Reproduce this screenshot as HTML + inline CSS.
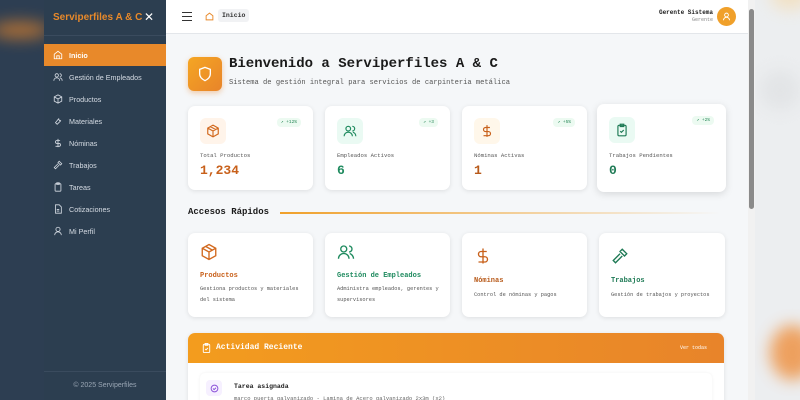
<!DOCTYPE html>
<html><head><meta charset="utf-8"><style>
*{box-sizing:border-box;margin:0;padding:0}
html,body{width:800px;height:400px;overflow:hidden}
body{position:relative;background:#2c3e50;font-family:"Liberation Mono","DejaVu Sans Mono",monospace}
.left{position:absolute;left:0;top:0;width:44px;height:400px;background:#2d3e52;overflow:hidden}
.blur{position:absolute;border-radius:50%;filter:blur(8px)}
.side{position:absolute;left:44px;top:0;width:122px;height:400px;background:#2c3e50;font-family:"Liberation Sans",sans-serif;color:#d5dbe3;font-size:7.2px}
.side .brand{height:36px;border-bottom:1px solid #3a4b5e;padding:12px 9px;color:#e8892a;font-weight:bold;font-size:10px;position:relative}
.side .brand span{position:absolute;right:12px;top:10px;color:#fff;font-weight:normal;font-size:12px}
.nav{margin-top:8px}
.nav div{height:22px;display:flex;align-items:center;padding-left:9px;gap:6px}
.nav div.act{background:#e8892a;color:#fff;font-weight:bold}
.nav svg{width:10px;height:10px;stroke:currentColor;fill:none;stroke-width:2}
.foot{position:absolute;bottom:0;left:0;right:0;height:29px;border-top:1px solid #3a4b5e;text-align:center;line-height:27px;font-size:7px;color:#9aa6b4}
.main{position:absolute;left:166px;top:0;width:582px;height:400px;background:#f5f7f9;overflow:hidden}
.top{height:34px;background:#fff;border-bottom:1px solid #e3e6ea;position:relative}
.sb{position:absolute;left:748px;top:0;width:7px;height:400px;background:#f1f1f1}
.sb div{position:absolute;left:1px;top:9px;width:5px;height:200px;background:#8a8a8a;border-radius:3px}
.right{position:absolute;left:755px;top:0;width:45px;height:400px;background:#eceef0;overflow:hidden}
.card{position:absolute;background:#fff;border-radius:7px;box-shadow:0 1px 5px rgba(0,0,0,.1)}
.ic{position:absolute;left:12px;top:12px;width:26px;height:26px;border-radius:6px;display:flex;align-items:center;justify-content:center}
.ic svg{width:14px;height:14px;fill:none;stroke-width:2}
.badge{position:absolute;right:12px;top:12px;font-size:4.5px;background:#ecfaf1;color:#2a8a5a;padding:2px 4px;border-radius:4px}
.lbl{position:absolute;left:12px;top:46px;font-size:5.6px;color:#555}
.val{position:absolute;left:12px;top:57px;font-size:13px;font-weight:bold}
.q svg{position:absolute;left:12px;top:10px;width:18px;height:18px;fill:none;stroke-width:1.8}
.q .t{position:absolute;left:12px;font-size:7px;font-weight:bold}
.q .d{position:absolute;left:12px;font-size:5.3px;color:#555;line-height:11px;width:110px}
</style></head><body>
<div class="left"><div class="blur" style="left:-10px;top:22px;width:60px;height:16px;background:#d9802d;opacity:.8"></div></div>
<div class="side">
<div class="brand">Serviperfiles A &amp; C<span>✕</span></div>
<div class="nav">
<div class="act"><svg viewBox="0 0 24 24"><path d="M3 10l9-7 9 7v11H3z"/><path d="M9 21v-7h6v7"/></svg>Inicio</div>
<div><svg viewBox="0 0 24 24"><circle cx="9" cy="8" r="4"/><path d="M2 21c0-4 3-7 7-7s7 3 7 7M16 4a4 4 0 010 8M22 21c0-3-2-6-5-7"/></svg>Gestión de Empleados</div>
<div><svg viewBox="0 0 24 24"><path d="M12 2l9 5v10l-9 5-9-5V7z M3 7l9 5 9-5M12 12v10"/></svg>Productos</div>
<div><svg viewBox="0 0 24 24"><path d="M14 6a4 4 0 005 5l-9 9-4-4z"/></svg>Materiales</div>
<div><svg viewBox="0 0 24 24"><path d="M12 2v20M17 6H9.5a3.5 3.5 0 000 7h5a3.5 3.5 0 010 7H6"/></svg>Nóminas</div>
<div><svg viewBox="0 0 24 24"><path d="M15 3l6 6-3 3-6-6zM12 9L3 18l3 3 9-9"/></svg>Trabajos</div>
<div><svg viewBox="0 0 24 24"><rect x="5" y="4" width="14" height="18" rx="2"/><path d="M9 2h6v4H9z"/></svg>Tareas</div>
<div><svg viewBox="0 0 24 24"><path d="M6 2h9l5 5v15H6z M9 13h6M9 17h6"/></svg>Cotizaciones</div>
<div><svg viewBox="0 0 24 24"><circle cx="12" cy="8" r="5"/><path d="M4 22c0-5 4-8 8-8s8 3 8 8"/></svg>Mi Perfil</div>
</div>
<div class="foot">© 2025 Serviperfiles</div>
</div>
<div class="main">
<div class="top">
<div style="position:absolute;left:16px;top:12px;width:10px;height:9px;border-top:1.5px solid #333;border-bottom:1.5px solid #333"><div style="margin-top:2.5px;height:1.5px;background:#333"></div></div>
<svg style="position:absolute;left:39px;top:12px" width="9" height="9" viewBox="0 0 24 24" fill="none" stroke="#e8892a" stroke-width="2.5"><path d="M3 10l9-7 9 7v11H3z"/></svg>
<div style="position:absolute;left:52px;top:9px;background:#f1f2f4;font-size:6.5px;font-weight:bold;padding:3px 4px;border-radius:3px;color:#333">Inicio</div>
<div style="position:absolute;right:35px;top:9px;text-align:right;font-size:6px"><b style="color:#222">Gerente Sistema</b><br><span style="color:#888;font-size:5px">Gerente</span></div>
<div style="position:absolute;left:551px;top:7px;width:19px;height:19px;border-radius:50%;background:#f0a02a;display:flex;align-items:center;justify-content:center"><svg width="9" height="9" viewBox="0 0 24 24" fill="none" stroke="#fff" stroke-width="2.5"><circle cx="12" cy="8" r="5"/><path d="M4 22c0-5 4-8 8-8s8 3 8 8"/></svg></div>
</div>
<div style="position:absolute;left:22px;top:57px;width:34px;height:34px;border-radius:6px;background:linear-gradient(135deg,#f5a623,#e8842a);box-shadow:0 2px 6px rgba(232,132,42,.4);display:flex;align-items:center;justify-content:center"><svg width="16" height="16" viewBox="0 0 24 24" fill="none" stroke="#fff" stroke-width="2"><path d="M12 2l8 3v7c0 5-4 8-8 10-4-2-8-5-8-10V5z"/></svg></div>
<div style="position:absolute;left:63px;top:56px;font-size:14px;font-weight:bold;color:#1a1a1a">Bienvenido a Serviperfiles A &amp; C</div>
<div style="position:absolute;left:63px;top:79px;font-size:7.1px;color:#555">Sistema de gestión integral para servicios de carpinteria metálica</div>

<div class="card" style="left:22px;top:106px;width:125px;height:84px"><div class="ic" style="background:#fff4ea"><svg viewBox="0 0 24 24" stroke="#d2691e"><path d="M12 2l9 5v10l-9 5-9-5V7z M3 7l9 5 9-5M12 12v10M7.5 4.5l9 5"/></svg></div><div class="badge">↗ +12%</div><div class="lbl">Total Productos</div><div class="val" style="color:#c8601a">1,234</div></div>
<div class="card" style="left:159px;top:106px;width:125px;height:84px"><div class="ic" style="background:#eafaf3"><svg viewBox="0 0 24 24" stroke="#1e8a5e"><circle cx="9" cy="8" r="4"/><path d="M2 21c0-4 3-7 7-7s7 3 7 7M16 4a4 4 0 010 8M22 21c0-3-2-6-5-7"/></svg></div><div class="badge">↗ +3</div><div class="lbl">Empleados Activos</div><div class="val" style="color:#1e8a5e">6</div></div>
<div class="card" style="left:296px;top:106px;width:125px;height:84px"><div class="ic" style="background:#fff7ea"><svg viewBox="0 0 24 24" stroke="#c8601a"><path d="M12 2v20M17 6H9.5a3.5 3.5 0 000 7h5a3.5 3.5 0 010 7H6"/></svg></div><div class="badge">↗ +5%</div><div class="lbl">Nóminas Activas</div><div class="val" style="color:#b85a1a">1</div></div>
<div class="card" style="left:431px;top:104px;width:129px;height:88px;box-shadow:0 2px 8px rgba(0,0,0,.13)"><div class="ic" style="background:#eafaf3;left:12px;top:13px"><svg viewBox="0 0 24 24" stroke="#1e7a55"><rect x="5" y="4" width="14" height="18" rx="2"/><path d="M9 2h6v4H9zM9 14l2 2 4-4"/></svg></div><div class="badge">↗ +2%</div><div class="lbl" style="top:48px">Trabajos Pendientes</div><div class="val" style="color:#1e7a55;top:59px">0</div></div>

<div style="position:absolute;left:22px;top:207px;font-size:9px;font-weight:bold;color:#1a1a1a">Accesos Rápidos</div>
<div style="position:absolute;left:114px;top:212px;width:440px;height:2px;background:linear-gradient(90deg,#f0a02a,rgba(240,160,42,0))"></div>

<div class="card q" style="left:22px;top:233px;width:125px;height:84px"><svg viewBox="0 0 24 24" stroke="#d2691e"><path d="M12 2l9 5v10l-9 5-9-5V7z M3 7l9 5 9-5M12 12v10M7.5 4.5l9 5"/></svg><div class="t" style="top:39px;color:#c8601a">Productos</div><div class="d" style="top:51px">Gestiona productos y materiales del sistema</div></div>
<div class="card q" style="left:159px;top:233px;width:125px;height:84px"><svg viewBox="0 0 24 24" stroke="#1e8a5e"><circle cx="9" cy="8" r="4"/><path d="M2 21c0-4 3-7 7-7s7 3 7 7M16 4a4 4 0 010 8M22 21c0-3-2-6-5-7"/></svg><div class="t" style="top:39px;color:#1e8a5e">Gestión de Empleados</div><div class="d" style="top:51px">Administra empleados, gerentes y supervisores</div></div>
<div class="card q" style="left:296px;top:233px;width:125px;height:84px"><svg viewBox="0 0 24 24" stroke="#c8601a" style="top:14px"><path d="M12 2v20M17 6H9.5a3.5 3.5 0 000 7h5a3.5 3.5 0 010 7H6"/></svg><div class="t" style="top:44px;color:#b85a1a">Nóminas</div><div class="d" style="top:57px">Control de nóminas y pagos</div></div>
<div class="card q" style="left:433px;top:233px;width:126px;height:84px"><svg viewBox="0 0 24 24" stroke="#1e7a55" style="top:14px"><path d="M15 3l6 6-3 3-6-6zM12 9L3 18l3 3 9-9"/></svg><div class="t" style="top:44px;color:#1e7a55">Trabajos</div><div class="d" style="top:57px">Gestión de trabajos y proyectos</div></div>

<div style="position:absolute;left:22px;top:333px;width:536px;height:80px;background:#fff;border-radius:7px;box-shadow:0 1px 5px rgba(0,0,0,.1);overflow:hidden">
<div style="height:30px;background:linear-gradient(90deg,#f39c1e,#e8842a);position:relative;color:#fff">
<svg style="position:absolute;left:13px;top:9px" width="11" height="12" viewBox="0 0 24 24" fill="none" stroke="#fff" stroke-width="2"><rect x="5" y="4" width="14" height="18" rx="2"/><path d="M9 2h6v4H9zM9 14l2 2 4-4"/></svg>
<div style="position:absolute;left:28px;top:10px;font-size:8px;font-weight:bold">Actividad Reciente</div>
<div style="position:absolute;right:17px;top:12px;font-size:5px">Ver todas</div></div>
<div style="position:absolute;left:12px;top:40px;width:512px;height:40px;background:#fff;border-radius:5px;box-shadow:0 0 3px rgba(0,0,0,.06)">
<div style="position:absolute;left:6px;top:7px;width:16px;height:16px;border-radius:4px;background:#f6f0ff;display:flex;align-items:center;justify-content:center"><svg width="9" height="9" viewBox="0 0 24 24" fill="none" stroke="#8a4fd8" stroke-width="2.5"><circle cx="12" cy="12" r="9"/><path d="M8 12l3 3 5-5"/></svg></div>
<div style="position:absolute;left:34px;top:10px;font-size:6.5px;font-weight:bold;color:#222">Tarea asignada</div>
<div style="position:absolute;left:34px;top:22px;font-size:5.5px;color:#666">marco puerta galvanizado - Lamina de Acero galvanizado 2x3m (x2)</div>
</div></div>
</div>
<div class="sb"><div></div></div>
<div class="right"><div class="blur" style="left:15px;top:-20px;width:40px;height:30px;background:#f5d9a8;opacity:.6"></div><div class="blur" style="left:5px;top:70px;width:40px;height:40px;background:#e2e4e6"></div><div class="blur" style="left:15px;top:325px;width:45px;height:55px;background:#ee8d3a;opacity:.8"></div></div>
</body></html>
